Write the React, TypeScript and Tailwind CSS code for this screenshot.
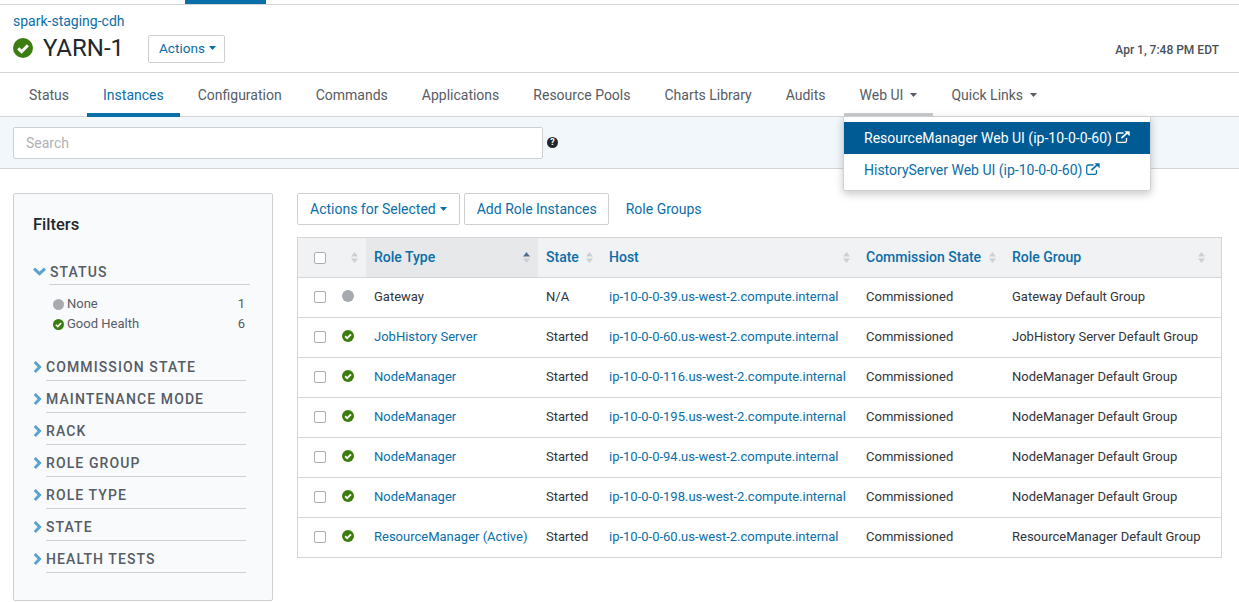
const LINK = 'text-[#0a6ea8]';

function CheckCircle({ size }: { size: number }) {
  return (
    <svg width={size} height={size} viewBox="0 0 20 20" className="shrink-0">
      <circle cx="10" cy="10" r="10" fill="#3c7d12" />
      <path d="M5.2 10.4 8.6 13.7 14.9 7.2" fill="none" stroke="#fff" strokeWidth="3" />
    </svg>
  );
}

function GrayDot({ size }: { size: number }) {
  return <span className="block shrink-0 rounded-full bg-[#a7abb0]" style={{ width: size, height: size }} />;
}

function Caret() {
  return (
    <svg width="7" height="4" viewBox="0 0 7 4" className="shrink-0">
      <path d="M0 0h7L3.5 4z" fill="currentColor" />
    </svg>
  );
}

function SortIcon({ active }: { active?: boolean }) {
  return (
    <svg width="7" height="11" viewBox="0 0 7 11" className="shrink-0">
      <path d="M3.5 0 7 4.6H0z" fill={active ? '#4f6f8f' : '#ccd0d4'} />
      <path d="M3.5 11 0 6.4h7z" fill="#ccd0d4" />
    </svg>
  );
}

function ExternalIcon() {
  return (
    <svg width="14" height="12" viewBox="0 0 14 12" className="ml-[4px] -mt-[2px] shrink-0" fill="none" stroke="currentColor">
      <path d="M7.5 2H2.4A1.7 1.7 0 0 0 .7 3.7v6A1.7 1.7 0 0 0 2.4 11.4h6.4a1.7 1.7 0 0 0 1.7-1.7V7" strokeWidth="1.3" />
      <path d="M5.4 7.2 11.4 1.6" strokeWidth="1.7" />
      <path d="M8.4.2h5.3v5z" fill="currentColor" stroke="none" />
    </svg>
  );
}

function ChevronRight() {
  return (
    <svg width="9" height="12" viewBox="0 0 9 12" className="shrink-0">
      <path d="M1.8 1 6.6 6 1.8 11" fill="none" stroke="#5ba3cf" strokeWidth="3" />
    </svg>
  );
}

function ChevronDown() {
  return (
    <svg width="13" height="9" viewBox="0 0 13 9" className="shrink-0">
      <path d="M1 1.6 6.5 6.6 12 1.6" fill="none" stroke="#5ba3cf" strokeWidth="3" />
    </svg>
  );
}

function Checkbox() {
  return <span className="block h-[12px] w-[12px] rounded-[2px] border border-[#a9aeb3] bg-white" />;
}

const tabs = ['Status', 'Instances', 'Configuration', 'Commands', 'Applications', 'Resource Pools', 'Charts Library', 'Audits'];

const filters = ['COMMISSION STATE', 'MAINTENANCE MODE', 'RACK', 'ROLE GROUP', 'ROLE TYPE', 'STATE', 'HEALTH TESTS'];

const rows = [
  { role: 'Gateway', state: 'N/A', host: 'ip-10-0-0-39.us-west-2.compute.internal', group: 'Gateway Default Group', none: true },
  { role: 'JobHistory Server', state: 'Started', host: 'ip-10-0-0-60.us-west-2.compute.internal', group: 'JobHistory Server Default Group' },
  { role: 'NodeManager', state: 'Started', host: 'ip-10-0-0-116.us-west-2.compute.internal', group: 'NodeManager Default Group' },
  { role: 'NodeManager', state: 'Started', host: 'ip-10-0-0-195.us-west-2.compute.internal', group: 'NodeManager Default Group' },
  { role: 'NodeManager', state: 'Started', host: 'ip-10-0-0-94.us-west-2.compute.internal', group: 'NodeManager Default Group' },
  { role: 'NodeManager', state: 'Started', host: 'ip-10-0-0-198.us-west-2.compute.internal', group: 'NodeManager Default Group' },
  { role: 'ResourceManager (Active)', state: 'Started', host: 'ip-10-0-0-60.us-west-2.compute.internal', group: 'ResourceManager Default Group' },
];

const GRID = 'grid grid-cols-[36px_32px_172px_63px_257px_146px_1fr]';

export default function App() {
  return (
    <div className="h-[602px] w-[1239px] overflow-hidden bg-white font-['Roboto',sans-serif] text-[13px] text-[#2b3037]">
      {/* Top strip */}
      <div className="h-[5px] border-b border-[#d3d5d8]">
        <div className="ml-[185px] h-[4px] w-[81px] bg-[#0a6ea8]" />
      </div>

      {/* Header */}
      <div className="flex h-[68px] border-b border-[#d3d5d8] pl-[13px] pr-[20px]">
        <div className="flex-1 pt-[9px]">
          <div className={`text-[14px] leading-[15px] ${LINK}`}>spark-staging-cdh</div>
          <div className="mt-[4px] flex items-center">
            <CheckCircle size={20} />
            <span className="ml-[10px] text-[24px] leading-[30px] text-[#22272d]">YARN-1</span>
            <button className={`ml-[24px] mt-[2px] flex h-[28px] items-center gap-[4px] rounded-[2px] border border-[#ccd0d4] pb-[2px] pl-[10px] pr-[8px] text-[13.6px] ${LINK}`}>
              Actions <Caret />
            </button>
          </div>
        </div>
        <div className="self-end pb-[15px] text-[12px] font-medium leading-[14px] text-[#4a5058]">Apr 1, 7:48 PM EDT</div>
      </div>

      {/* Tabs */}
      <div className="relative flex h-[44px] gap-[2px] border-b border-[#d3d5d8] pl-[13px] text-[14px]">
        {tabs.map((t) => (
          <div
            key={t}
            className={`flex h-[44px] items-center border-b-[4px] px-[16px] pt-[4px] ${
              t === 'Instances' ? 'border-[#0a6ea8] text-[#0a6ea8]' : 'border-transparent text-[#565c64]'
            }`}
          >
            {t}
          </div>
        ))}
        <div className="flex h-[44px] items-center gap-[7px] border-b-[4px] border-[#c9cbce] px-[16px] pt-[4px] text-[#565c64]">
          Web UI <Caret />
        </div>
        <div className="flex h-[44px] items-center gap-[7px] border-b-[4px] border-transparent px-[16px] pt-[4px] text-[#565c64]">
          Quick Links <Caret />
        </div>

        {/* Web UI menu */}
        <div className="absolute left-[843px] top-[43px] z-10 h-[75px] w-[308px] rounded-b-[2px] border border-[#cfd1d4] bg-white py-[5px] shadow-[0_3px_8px_rgba(0,0,0,0.22)]">
          <div className="flex h-[32px] items-center bg-[#005a94] pl-[20px] text-white">
            ResourceManager Web UI (ip-10-0-0-60)
            <ExternalIcon />
          </div>
          <div className={`flex h-[32px] items-center pl-[20px] ${LINK}`}>
            HistoryServer Web UI (ip-10-0-0-60)
            <ExternalIcon />
          </div>
        </div>
      </div>

      {/* Search strip */}
      <div className="flex h-[52px] items-center border-b border-[#d3d5d8] bg-[#f2f7fb] pl-[13px]">
        <div className="flex h-[32px] w-[530px] items-center rounded-[2px] border border-[#ccd0d4] bg-white pl-[12px] pt-[2px] text-[14px] text-[#aeb2b7]">Search</div>
        <span className="ml-[4px] flex h-[11px] w-[11px] items-center justify-center rounded-full bg-[#22272d] text-[9px] font-bold leading-none text-white">?</span>
      </div>

      {/* Body */}
      <div className="flex pl-[13px] pt-[24px]">
        <aside className="h-[408px] w-[260px] shrink-0 rounded-[2px] border border-[#ccd0d4] bg-[#f9fafc] pl-[19px] pr-[22px] pt-[21px]">
          <h3 className="text-[16.5px] font-medium leading-[20px] text-[#22272d]">Filters</h3>
          <div className="mt-[27px] flex h-[23px] items-start border-b border-[#ccd0d4] pt-[2px] [border-image:linear-gradient(to_right,transparent_17px,#ccd0d4_17px)_1]">
            <span className="mt-[3px]"><ChevronDown /></span>
            <span className="ml-[4px] text-[14px] font-medium leading-[16px] tracking-[1.1px] text-[#555c65]">STATUS</span>
          </div>
          <div className="pl-[20px] pr-[5px] pt-[9px] text-[13px] text-[#565c64]">
            <div className="flex h-[20px] items-center">
              <GrayDot size={11} />
              <span className="ml-[3px] flex-1">None</span>
              <span>1</span>
            </div>
            <div className="flex h-[20px] items-center">
              <CheckCircle size={11} />
              <span className="ml-[3px] flex-1">Good Health</span>
              <span>6</span>
            </div>
          </div>
          <div className="mt-[24px]">
            {filters.map((f) => (
              <div key={f} className="mb-[9px] mr-[4px]">
                <div className="flex h-[22px] items-start pt-[1px]">
                  <span className="mt-[2px]"><ChevronRight /></span>
                  <span className="ml-[4px] text-[14px] font-medium leading-[16px] tracking-[1.1px] text-[#555c65]">{f}</span>
                </div>
                <div className="ml-[13px] border-t border-[#ccd0d4]" />
              </div>
            ))}
          </div>
        </aside>

        <main className="ml-[24px] w-[925px]">
          <div className="flex items-center text-[14px]">
            <button className={`flex h-[32px] items-center gap-[4px] rounded-[2px] border border-[#ccd0d4] px-[12px] ${LINK}`}>
              Actions for Selected <Caret />
            </button>
            <button className={`ml-[4px] flex h-[32px] items-center rounded-[2px] border border-[#ccd0d4] pl-[12px] pr-[11px] ${LINK}`}>
              Add Role Instances
            </button>
            <span className={`ml-[17px] ${LINK}`}>Role Groups</span>
          </div>

          <div className="mt-[12px] border border-b-0 border-[#d3d5d8]">
            <div className={`${GRID} h-[40px] items-stretch border-b border-[#d3d5d8] bg-[#f1f2f4] text-[14px] font-medium ${LINK}`}>
              <div className="flex items-center pl-[16px]"><Checkbox /></div>
              <div className="flex items-center justify-end pr-[8px]"><SortIcon /></div>
              <div className="flex items-center justify-between bg-[#e6e8ea] pl-[8px] pr-[8px]">Role Type <SortIcon active /></div>
              <div className="flex items-center pl-[8px]">State <span className="ml-[7px]"><SortIcon /></span></div>
              <div className="flex items-center justify-between pl-[8px] pr-[8px]">Host <SortIcon /></div>
              <div className="flex items-center justify-between pl-[8px] pr-[8px]">Commission State <SortIcon /></div>
              <div className="flex items-center justify-between pl-[8px] pr-[16px]">Role Group <SortIcon /></div>
            </div>
            {rows.map((r, i) => (
              <div key={i} className={`${GRID} h-[40px] items-center border-b border-[#d3d5d8] text-[13px] text-[#2f343a]`}>
                <div className="-mt-[1px] pl-[16px]"><Checkbox /></div>
                <div className="-mt-[3px] flex justify-end pr-[12px]">
                  {r.none ? <GrayDot size={12} /> : <CheckCircle size={12} />}
                </div>
                <div className={`pb-[2px] pl-[8px] ${r.none ? '' : LINK}`}>{r.role}</div>
                <div className="pb-[2px] pl-[8px]">{r.state}</div>
                <div className={`pb-[2px] pl-[8px] ${LINK}`}>{r.host}</div>
                <div className="pb-[2px] pl-[8px]">Commissioned</div>
                <div className="pb-[2px] pl-[8px]">{r.group}</div>
              </div>
            ))}
          </div>
        </main>
      </div>
    </div>
  );
}
